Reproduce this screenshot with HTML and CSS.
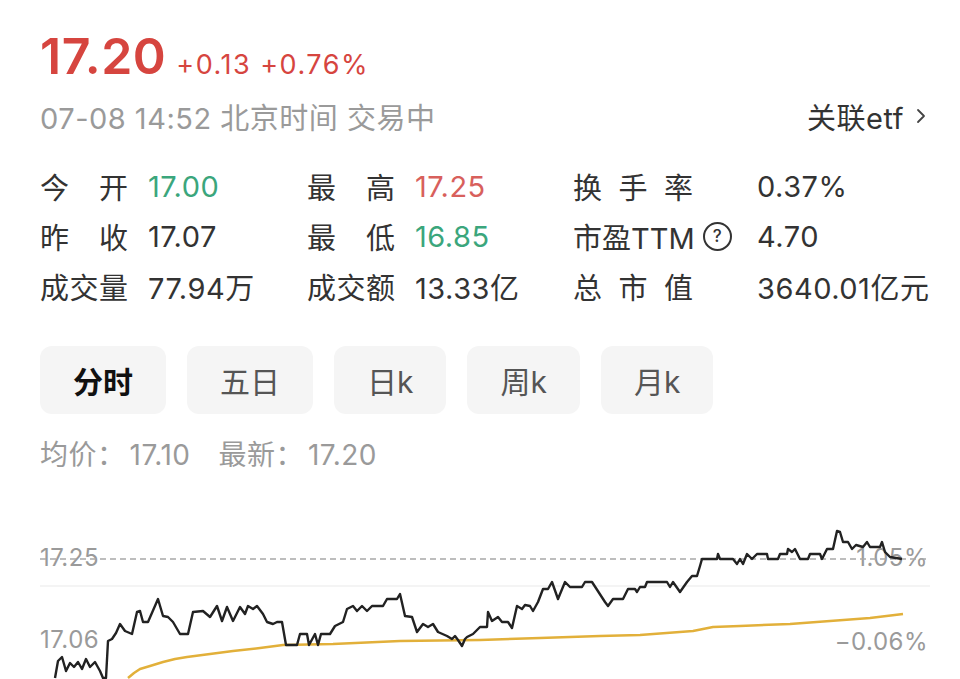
FILE: index.html
```html
<!DOCTYPE html>
<html lang="zh-CN">
<head>
  <meta charset="UTF-8" />
  <meta name="viewport" content="width=device-width, initial-scale=1.0"/>
  <title>行情</title>
  <link rel="stylesheet" href="styles.css">
</head>
<body>
  <div class="quote">
    <div class="price-row">
      <span class="price">17.20</span>
      <span class="change">+0.13 +0.76%</span>
    </div>

    <div class="meta-row">
      <span class="meta-time">07-08 14:52 北京时间 交易中</span>
      <a class="etf-link">关联etf
        <svg class="chevron" width="10" height="16" viewBox="0 0 10 16"><polyline points="2,2 8,8 2,14" /></svg>
      </a>
    </div>

    <div class="stats">
      <div class="cell"><span class="label">今开</span><span class="value down">17.00</span></div>
      <div class="cell"><span class="label">最高</span><span class="value up">17.25</span></div>
      <div class="cell"><span class="label wide">换手率</span><span class="value">0.37%</span></div>

      <div class="cell"><span class="label">昨收</span><span class="value">17.07</span></div>
      <div class="cell"><span class="label">最低</span><span class="value down">16.85</span></div>
      <div class="cell"><span class="label wide plain">市盈TTM<i class="help">?</i></span><span class="value">4.70</span></div>

      <div class="cell"><span class="label">成交量</span><span class="value">77.94万</span></div>
      <div class="cell"><span class="label">成交额</span><span class="value">13.33亿</span></div>
      <div class="cell"><span class="label wide">总市值</span><span class="value">3640.01亿元</span></div>
    </div>

    <div class="tabs">
      <button class="tab active">分时</button>
      <button class="tab">五日</button>
      <button class="tab">日k</button>
      <button class="tab">周k</button>
      <button class="tab">月k</button>
    </div>

    <div class="avg-row">
      <span>均价：<b>17.10</b></span>
      <span>最新：<b>17.20</b></span>
    </div>

    <svg class="chart" width="890" height="204" viewBox="40 476 890 204">
      <line class="grid" x1="40" y1="587" x2="930" y2="587" />
      <text class="axis" x="40" y="567">17.25</text>
      <text class="axis" x="928" y="567" text-anchor="end">1.05%</text>
      <text class="axis" x="40" y="649">17.06</text>
      <text class="axis" x="928" y="651" text-anchor="end">−0.06%</text>
      <line class="ref" x1="40" y1="560" x2="930" y2="560" />

      <polyline class="avg-line" points="128,679 134,674 140,670 150,667 163,663 175,660 187,658 210,655 233,652 260,649 283,646 333,645 400,642 480,641 540,639 600,637 640,636 693,632 713,628 740,627 790,625 830,622 870,619 903,615" />

      <polyline class="price-line" points="55,679 58,662 62,658 66,672 70,664 74,668 78,663 82,670 86,660 90,668 95,663 100,672 103,679 106,679 108,642 112,640 116,634 120,625 125,632 132,635 137,613 140,612 143,623 148,623 158,600 163,617 168,618 173,623 180,635 188,635 193,613 203,612 210,618 217,607 222,622 227,608 233,622 240,608 245,615 248,607 253,610 257,607 263,615 267,623 273,625 277,623 282,623 286,646 297,646 300,635 307,635 309,646 315,635 318,646 321,635 330,635 335,627 343,623 347,610 353,607 357,612 362,607 367,612 372,607 383,607 387,600 397,600 400,595 405,617 412,618 417,633 423,625 428,628 433,625 438,633 447,637 452,640 455,637 458,641 462,647 465,640 467,638 473,635 480,628 487,628 488,613 492,622 498,618 502,623 508,623 512,629 517,607 522,610 525,606 530,607 533,612 538,603 543,590 548,590 552,583 558,600 565,583 570,588 582,588 585,583 592,583 605,603 608,607 613,600 623,600 628,590 635,590 637,593 640,588 645,588 647,583 667,583 670,588 673,583 680,593 687,583 692,577 697,577 700,567 702,560 717,560 718,555 720,560 733,560 737,565 740,560 743,565 747,555 752,560 757,555 767,555 768,560 778,560 780,555 787,555 788,550 792,553 795,550 800,560 808,560 810,555 820,555 822,560 827,550 833,550 837,532 840,533 843,543 848,543 852,550 856,546 863,548 867,543 870,548 880,548 882,543 885,553 890,558 902,560" />
    </svg>
  </div>
</body>
</html>
```

FILE: styles.css
```css
* { box-sizing: border-box; margin: 0; padding: 0; }
html, body { height: 100%; overflow: hidden; background: #fff; }
body {
  font-family: Inter, "Noto Sans CJK SC", sans-serif;
  color: #333;
}
.quote { padding: 26px 32px 0 40px; }

/* price header */
.price-row { display: flex; align-items: baseline; gap: 10px; height: 60px; line-height: 60px; }
.price { font-size: 50px; font-weight: 600; color: #d6453f; letter-spacing: 0.5px; }
.change { font-size: 27px; color: #d6453f; letter-spacing: 1.5px; }

.meta-row {
  display: flex; justify-content: space-between; align-items: center;
  margin-top: 10px; height: 40px; font-size: 29px; letter-spacing: 0.5px;
}
.meta-time { color: #9a9a9a; }
.etf-link { display: flex; align-items: center; gap: 12px; color: #333; padding-right: 2px; letter-spacing: 0.5px; }
.chevron polyline { fill: none; stroke: #444; stroke-width: 1.8; stroke-linecap: round; stroke-linejoin: round; }

/* quote stats */
.stats {
  display: grid;
  grid-template-columns: 267px 266px 1fr;
  grid-auto-rows: 50px;
  margin-top: 25px;
  font-size: 29px;
}
.cell { display: flex; align-items: center; gap: 20px; }
.label { width: 88px; text-align-last: justify; white-space: nowrap; }
.label.wide { width: 120px; margin-right: 44px; }
.label.plain { text-align-last: auto; display: flex; align-items: center; gap: 8px; width: 164px; margin-right: 0; }
.value { color: #333; letter-spacing: 0.5px; white-space: nowrap; }
.value.up { color: #d8605c; }
.value.down { color: #3ba67c; }
.help {
  display: inline-flex; justify-content: center; align-items: center;
  width: 29px; height: 29px; border: 2px solid #333; border-radius: 50%;
  font-style: normal; font-size: 17px; font-weight: 500;
}

/* period tabs */
.tabs { display: flex; gap: 21px; margin-top: 35px; }
.tab {
  height: 68px; padding: 0 33px;
  border: none; border-radius: 12px;
  background: #f5f5f5;
  font-family: inherit; font-size: 30px; color: #555;
}
.tab.active { color: #111; font-weight: 600; }

.avg-row { display: flex; gap: 28px; margin-top: 21px; height: 40px; line-height: 40px; font-size: 28px; color: #9a9a9a; letter-spacing: 0.5px; }
.avg-row b { font-weight: 400; margin-left: 4px; }

/* intraday chart */
.chart { display: block; overflow: visible; }
.chart .grid { stroke: #f1f1f1; stroke-width: 1.5; }
.chart .ref { stroke: #a8a8a8; stroke-width: 1.5; stroke-dasharray: 6 4; }
.chart .axis { font-family: Inter, sans-serif; font-size: 24px; fill: #9a9a9a; letter-spacing: 0.5px; }
.chart .avg-line { fill: none; stroke: #e2b03a; stroke-width: 2.5; stroke-linejoin: round; }
.chart .price-line { fill: none; stroke: #222; stroke-width: 2.4; stroke-linejoin: round; }
```
